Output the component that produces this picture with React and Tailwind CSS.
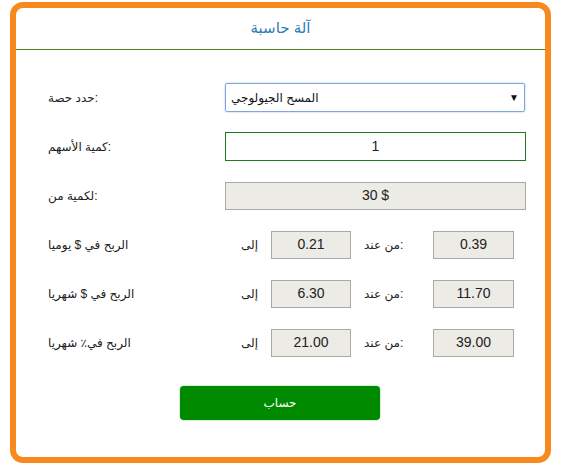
import { useState } from 'react';

const FONT = 'font-["Liberation_Sans","DejaVu_Sans",sans-serif]';

// daily / monthly / percent rows: [label, to, from]
const PROFIT_ROWS = [
  ['الربح في $ يوميا', '0.21', '0.39'],
  ['الربح في $ شهريا', '6.30', '11.70'],
  ['الربح في٪ شهريا', '21.00', '39.00'],
];

const Box = ({ children, className = '' }) => (
  <div
    className={`h-[28px] flex items-center justify-center border border-[#a9a9a9] bg-[#ecebe6] text-[14px] text-[#222] ${className}`}
  >
    {children}
  </div>
);

const App = () => {
  const [shares] = useState('1');

  return (
    <div className={`w-[564px] h-[465px] bg-white pl-[10px] pt-[2px] ${FONT}`}>
      <div className="w-[541px] h-[461px] border-[6px] border-[#f7891f] rounded-[13px] bg-white flex flex-col">
        <div className="h-[42px] flex items-center justify-center border-b border-[#4f7f22] text-[15px] text-[#2d7db3]">
          آلة حاسبة
        </div>

        <div className="flex flex-col pl-[32px] pt-[23px]">
          <div className="h-[49px] flex items-center">
            <div className="w-[177px] text-[12px] text-[#222]">حدد حصة:</div>
            <div className="w-[300px] h-[29px] flex items-center justify-between border border-[#7ea7de] rounded-[2px] shadow-[0_0_2px_#9bbbe8] px-[5px] text-[12px] text-[#111]">
              <span>المسح الجيولوجي</span>
              <span className="text-[10px]">▼</span>
            </div>
          </div>

          <div className="h-[49px] flex items-center">
            <div className="w-[177px] text-[12px] text-[#222]">كمية الأسهم:</div>
            <div className="w-[301px] h-[29px] flex items-center justify-center border border-[#1f7a1f] text-[14px] text-[#222]">
              {shares}
            </div>
          </div>

          <div className="h-[49px] flex items-center">
            <div className="w-[177px] text-[12px] text-[#222]">لكمية من:</div>
            <Box className="w-[301px]">30 $</Box>
          </div>

          {PROFIT_ROWS.map(([label, to, from]) => (
            <div key={label} className="h-[49px] flex items-center">
              <div className="w-[177px] text-[12px] text-[#222]">{label}</div>
              <div className="w-[46px] pr-[13px] text-right text-[12px] text-[#222]">إلى</div>
              <Box className="w-[80px]">{to}</Box>
              <div className="w-[82px] pl-[13px] text-[12px] text-[#222]">من عند:</div>
              <Box className="w-[81px]">{from}</Box>
            </div>
          ))}

          <div className="pt-[19px] pl-[132px]">
            <button
              type="button"
              className="w-[200px] h-[34px] rounded-[4px] bg-[#008a00] shadow-[0_0_2px_#7fbf7f] text-white text-[12px]"
            >
              حساب
            </button>
          </div>
        </div>
      </div>
    </div>
  );
};

export default App;
